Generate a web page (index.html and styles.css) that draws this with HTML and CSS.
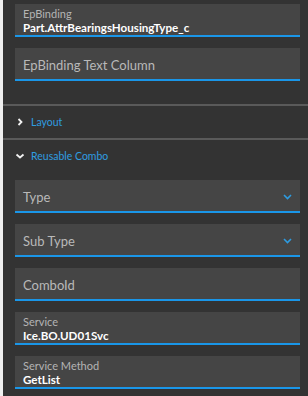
FILE: index.html
```html
<html>
  <head>
    <title>Properties</title>
    <meta charset="utf-8" />
    <meta name="viewport" content="width=device-width, initial-scale=1">
    <link rel="stylesheet" href="styles.css">
  </head>
  <body>
    <div class="gutter"></div>

    <div class="panel">
      <div class="group top">
        <div class="field">
          <span class="label">EpBinding</span>
          <span class="value">Part.AttrBearingsHousingType_c</span>
        </div>
        <div class="field empty">
          <span class="placeholder">EpBinding Text Column</span>
        </div>
      </div>

      <div class="section">
        <svg class="chev" width="8" height="8" viewBox="0 0 8 8">
          <path d="M2.5 1 L5.5 4 L2.5 7" fill="none" stroke="#f2f2f2" stroke-width="1.8" />
        </svg>
        <span>Layout</span>
      </div>

      <div class="section open">
        <svg class="chev" width="10" height="8" viewBox="0 0 10 8">
          <path d="M1.5 2.5 L5 5.5 L8.5 2.5" fill="none" stroke="#f2f2f2" stroke-width="1.8" />
        </svg>
        <span>Reusable Combo</span>
      </div>

      <div class="group">
        <div class="field empty select">
          <span class="placeholder">Type</span>
          <svg class="arrow" width="9" height="6" viewBox="0 0 9 6">
            <path d="M1 1 L4.5 4.5 L8 1" fill="none" stroke="#2d9be0" stroke-width="1.6" />
          </svg>
        </div>
        <div class="field empty select">
          <span class="placeholder">Sub Type</span>
          <svg class="arrow" width="9" height="6" viewBox="0 0 9 6">
            <path d="M1 1 L4.5 4.5 L8 1" fill="none" stroke="#2d9be0" stroke-width="1.6" />
          </svg>
        </div>
        <div class="field empty">
          <span class="placeholder">ComboId</span>
        </div>
        <div class="field">
          <span class="label">Service</span>
          <span class="value">Ice.BO.UD01Svc</span>
        </div>
        <div class="field">
          <span class="label">Service Method</span>
          <span class="value">GetList</span>
        </div>
      </div>
    </div>
  </body>
</html>
```

FILE: styles.css
```css
body{
  margin: 0;
  padding: 0;
  height: 396px;
  display: flex;
  flex-direction: row;
  background-color: #333333;
  font-family: Lato, "Noto Sans", sans-serif;
  overflow: hidden;
}

.gutter{
  width: 3px;
  background-color: #efefef;
}

.panel{
  flex: 1;
  display: flex;
  flex-direction: column;
}

.group{
  display: flex;
  flex-direction: column;
  gap: 11px;
  padding: 8px 8px 0 12px;
}

.group.top{
  padding-top: 4px;
  padding-bottom: 23px;
  border-bottom: 2px solid #5a5a5a;
}

.field{
  height: 31px;
  box-sizing: content-box;
  background-color: #454545;
  border-bottom: 2px solid #1a96e8;
  padding: 0 8px;
  display: flex;
  flex-direction: column;
  justify-content: flex-start;
}

.label{
  font-size: 11px;
  line-height: 12px;
  margin-top: 4px;
  color: #b4b4b4;
}

.value{
  font-size: 11.6px;
  line-height: 14px;
  margin-top: 1px;
  font-weight: bold;
  color: #ffffff;
}

.field.empty{
  flex-direction: row;
  align-items: center;
  justify-content: space-between;
  height: 28px;
  padding-top: 3px;
}

.placeholder{
  font-size: 13px;
  color: #b9b9b9;
}

.section{
  height: 32px;
  display: flex;
  flex-direction: row;
  align-items: center;
  padding-left: 13px;
  font-size: 10.5px;
  color: #2f9de0;
  border-bottom: 2px solid #5a5a5a;
}

.section.open{
  border-bottom: none;
  padding-left: 12px;
}

.chev{
  margin-right: 7px;
}

.section.open .chev{
  margin-right: 6px;
}
```
